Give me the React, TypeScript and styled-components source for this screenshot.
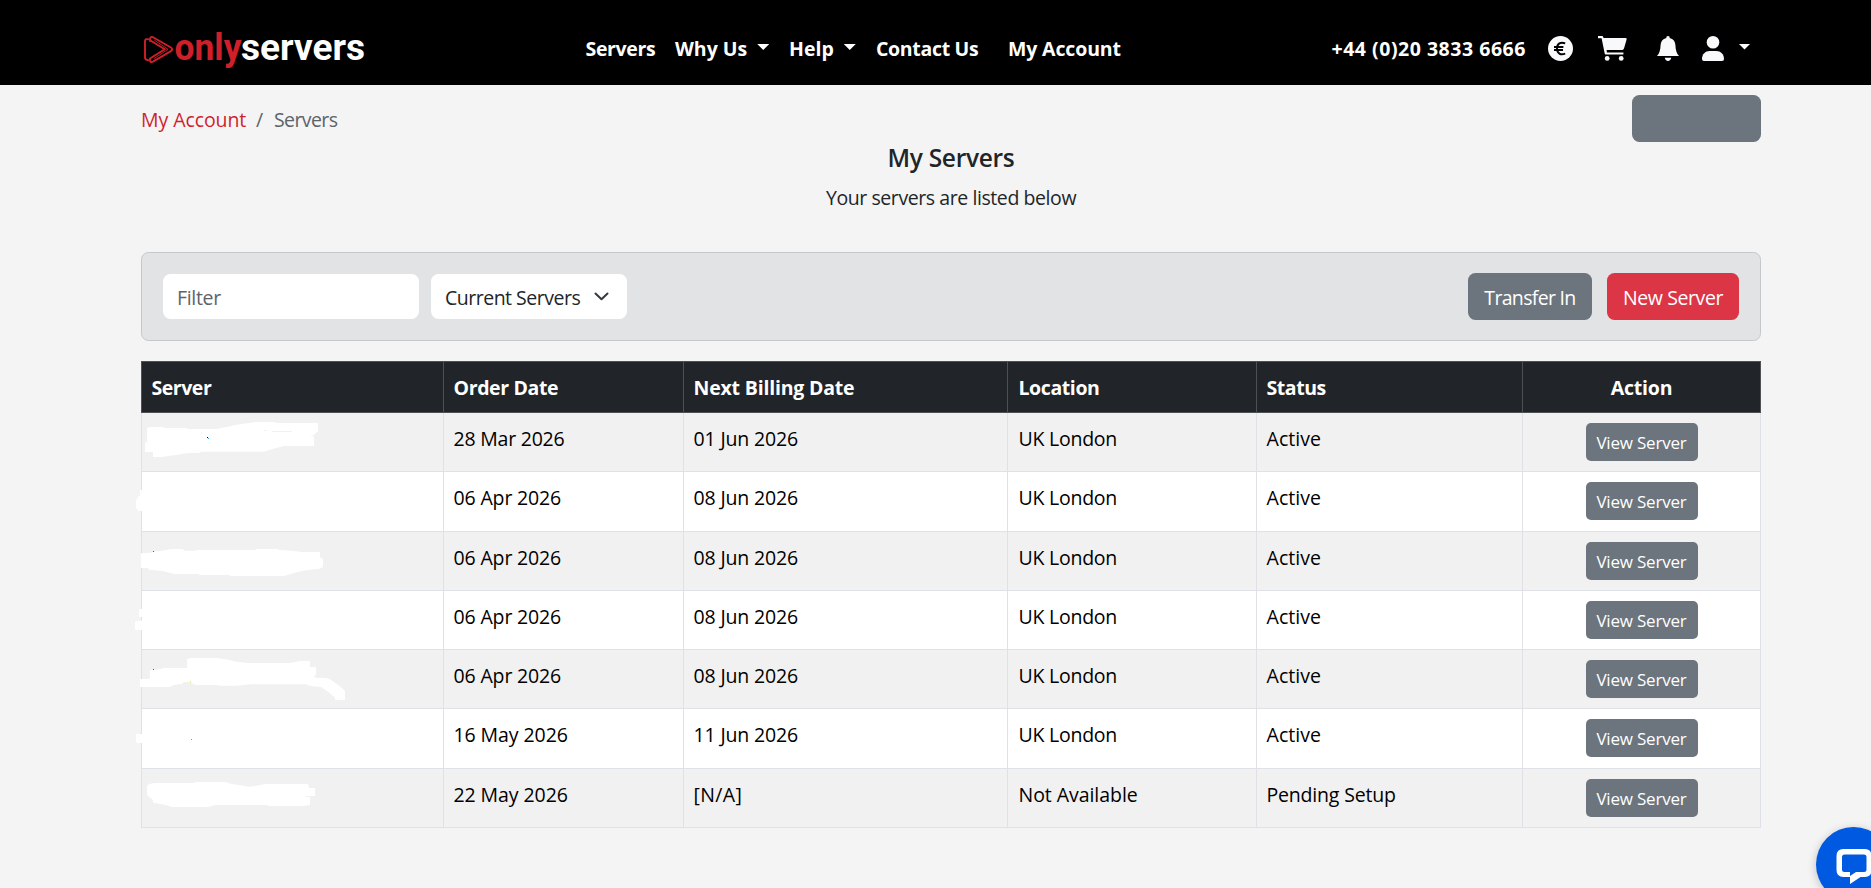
import React from "react";
import styled, { createGlobalStyle } from "styled-components";

const GlobalStyle = createGlobalStyle`
  * { box-sizing: border-box; }
  html, body { margin: 0; padding: 0; overflow: hidden; }
  body {
    background: #f4f4f4;
    color: #212529;
    font-family: "Open Sans", "Noto Sans", sans-serif;
    font-size: 19.5px;
    line-height: 30px;
  }
`;

const Page = styled.div`
  position: relative;
  width: 1871px;
  height: 888px;
  overflow: hidden;
`;

const Header = styled.header`
  display: flex;
  align-items: center;
  height: 85px;
  padding: 12px 0 0 141px;
  background: #000;
  color: #fff;
`;

const Logo = styled.svg`
  flex: none;
  margin-top: 1px;
  overflow: visible;
`;

const Nav = styled.nav`
  display: grid;
  grid-template-columns: 89.5px 114px 87px 132px 115.5px;
  margin-left: 214.5px;
  font-weight: 700;
`;

const NavItem = styled.a<{ $track: number }>`
  display: flex;
  align-items: center;
  gap: 10px;
  padding-top: 1px;
  white-space: nowrap;
  letter-spacing: ${(p) => p.$track}px;
`;

const Caret = styled.span`
  width: 12px;
  height: 6px;
  margin-top: -4px;
  background: #fff;
  clip-path: polygon(0 0, 100% 0, 50% 100%);
`;

const Tools = styled.div`
  display: flex;
  align-items: center;
  margin-left: 208px;
  font-weight: 700;
`;

const Phone = styled.span`
  width: 216px;
  padding-top: 1px;
  letter-spacing: 0.52px;
  white-space: nowrap;
`;

const ToolIcon = styled.svg<{ $after: number }>`
  flex: none;
  margin-right: ${(p) => p.$after}px;
  fill: #f8f9fa;
`;

const Main = styled.main`
  width: 1620px;
  margin-left: 141px;
  padding-top: 10px;
`;

const TopRow = styled.div`
  display: flex;
  justify-content: space-between;
`;

const Breadcrumb = styled.div`
  display: flex;
  padding-top: 10px;
  color: #5c636a;
  a { color: #d01f2e; letter-spacing: -0.08px; width: 115px; }
  i { font-style: normal; width: 18px; }
  span { letter-spacing: -0.6px; }
`;

const Button = styled.button<{ $w: number; $bg?: string; $track?: number }>`
  width: ${(p) => p.$w}px;
  height: 47px;
  padding: 2px 0 0;
  border: 0;
  border-radius: 7.5px;
  background: ${(p) => p.$bg ?? "#6c757d"};
  color: #fff;
  font: inherit;
  letter-spacing: ${(p) => p.$track ?? 0}px;
  white-space: nowrap;
`;

const SmallButton = styled.button`
  display: block;
  width: 112px;
  height: 38px;
  margin: -1px 0 0 53px;
  padding: 1px 0 0;
  border: 0;
  border-radius: 5px;
  background: #6c757d;
  color: #fff;
  font: inherit;
  font-size: 17px;
  letter-spacing: -0.2px;
`;

const Title = styled.h1`
  margin: 1px 0 9px;
  font-size: 24.5px;
  font-weight: 600;
  line-height: 30px;
  letter-spacing: -0.3px;
  text-align: center;
`;

const Subtitle = styled.p`
  margin: 0;
  padding-top: 1px;
  text-align: center;
  letter-spacing: -0.42px;
`;

const FilterCard = styled.section`
  display: flex;
  align-items: center;
  height: 89px;
  margin-top: 39px;
  padding: 0 21px;
  border: 1px solid #c4c8cb;
  border-radius: 7.5px;
  background: #e2e3e5;
`;

const FilterInput = styled.input`
  width: 256px;
  height: 45px;
  padding: 2px 14px 0;
  border: 0;
  border-radius: 7.5px;
  background: #fff;
  font: inherit;
  letter-spacing: -0.32px;
  &::placeholder { color: #5c636a; opacity: 1; }
`;

const Select = styled.div`
  display: flex;
  align-items: center;
  justify-content: space-between;
  width: 196px;
  height: 45px;
  margin: 0 auto 0 12px;
  padding: 2px 18px 0 14px;
  border-radius: 7.5px;
  background: #fff;
  letter-spacing: -0.5px;
  svg { margin-top: -3px; }
`;

const Actions = styled.div`
  display: flex;
  gap: 15px;
`;

const TableWrap = styled.div`
  position: relative;
  margin-top: 20px;
`;

const Table = styled.table`
  width: 1620px;
  table-layout: fixed;
  border-collapse: separate;
  border-spacing: 0;
`;

const Th = styled.th<{ $track: number; $center?: boolean }>`
  height: 52px;
  padding: 2px 9.5px 0;
  border: solid #4d5154;
  border-width: 1px 0 1px 1px;
  background: #212529;
  color: #fff;
  text-align: ${(p) => (p.$center ? "center" : "left")};
  letter-spacing: ${(p) => p.$track}px;
  &:last-child { border-right-width: 1px; }
  &:nth-child(4) { padding-left: 10.5px; }
`;

const Row = styled.tr<{ $h: number; $striped: boolean }>`
  height: ${(p) => p.$h}px;
  background: ${(p) => (p.$striped ? "#f1f1f1" : "#fff")};
`;

const Td = styled.td<{ $track?: number }>`
  padding: 11px 9.5px 0;
  border: solid #dee2e6;
  border-width: 0 0 1px 1px;
  color: #000;
  vertical-align: top;
  letter-spacing: ${(p) => p.$track ?? 0}px;
  &:last-child { border-right-width: 1px; }
  &:nth-child(4) { padding-left: 10.5px; }
`;

const Redactions = styled.svg`
  position: absolute;
  left: -21px;
  top: 39px;
  fill: #fff;
  pointer-events: none;
`;

const ChatButton = styled.div`
  position: absolute;
  left: 1816px;
  top: 827px;
  width: 75px;
  height: 75px;
  border-radius: 50%;
  background: #0059e1;
  box-shadow: 0 2px 10px rgba(0, 0, 0, 0.22);
`;

const columns = [302, 240, 324, 249, 266, 239];

type Server = [string, string, string, string, number];
const servers: Server[] = [
  ["28 Mar 2026", "01 Jun 2026", "UK London", "Active", 59],
  ["06 Apr 2026", "08 Jun 2026", "UK London", "Active", 60],
  ["06 Apr 2026", "08 Jun 2026", "UK London", "Active", 59],
  ["06 Apr 2026", "08 Jun 2026", "UK London", "Active", 59],
  ["06 Apr 2026", "08 Jun 2026", "UK London", "Active", 59],
  ["16 May 2026", "11 Jun 2026", "UK London", "Active", 60],
  ["22 May 2026", "[N/A]", "Not Available", "Pending Setup", 59],
];

const tracking: Record<string, number> = {
  "28 Mar 2026": -0.22,
  "16 May 2026": -0.08,
  "22 May 2026": -0.08,
  "UK London": -0.24,
  Active: 0.05,
  "Not Available": -0.05,
  "Pending Setup": -0.18,
  "[N/A]": 0.36,
};
const track = (text: string) => tracking[text] ?? -0.15;

export default function App() {
  return (
    <Page>
      <GlobalStyle />
      <Header>
        <Logo width="230" height="50" viewBox="141 24 230 50">
          <g fill="none" stroke="#cf2029" strokeWidth="1.9" strokeLinejoin="round" strokeLinecap="round">
            <path d="M148.2 39.3 Q145 38.6 145 41 V57.5 Q145 60 148.2 60.2" />
            <path d="M150 41 V39.5 Q150 36 153 37.2 L170.5 47.2 Q174 49.3 170.5 51.4 L153 61.6 Q150 62.8 150 60 V58.5 L164.8 49.3 L150 40.2" />
            <path d="M154.5 40.2 L168 49.3 L154.5 58.3" strokeWidth="0.9" />
          </g>
          <g fontFamily="Roboto, sans-serif" fontWeight="700" fontSize="37">
            <text x="174.5" y="59.8" fill="#cf2029" textLength="67" lengthAdjust="spacingAndGlyphs">only</text>
            <text x="241" y="59.8" fill="#fff" textLength="124" lengthAdjust="spacingAndGlyphs">servers</text>
          </g>
        </Logo>
        <Nav>
          <NavItem $track={-0.35}>Servers</NavItem>
          <NavItem $track={0}>Why Us<Caret /></NavItem>
          <NavItem $track={0}>Help<Caret /></NavItem>
          <NavItem $track={-0.32}>Contact Us</NavItem>
          <NavItem $track={-0.14}>My Account</NavItem>
        </Nav>
        <Tools>
          <Phone>+44 (0)20 3833 6666</Phone>
          <ToolIcon $after={25.5} width="25" height="25" viewBox="0 0 25 25">
            <circle cx="12.5" cy="12.5" r="12.5" />
            <path
              d="M17.2 7.4 C12.6 5.6 9 7.6 9 12.5 C9 17.4 12.6 19.4 17.2 17.6 M6 11 H15.4 M6 14 H15"
              fill="none" stroke="#000" strokeWidth="1.9"
            />
          </ToolIcon>
          <ToolIcon $after={29.5} width="29" height="25" viewBox="0 0 29 25">
            <path d="M0 0 H4.6 L5.6 2 H27.6 Q29 2 28.6 3.4 L26 12.6 Q25.6 14 24.2 14 H8.6 L8.9 16.4 H25.4 V18.4 H7.4 Q6.9 18.4 6.7 17.6 L3.6 2.2 H0 Z" />
            <circle cx="9.2" cy="22.4" r="2.4" />
            <circle cx="23.2" cy="22.4" r="2.4" />
          </ToolIcon>
          <ToolIcon $after={23} width="22" height="25" viewBox="0 0 22 25">
            <path d="M11 0 C12.3 0 12.8 .8 12.6 1.9 C16.4 2.8 18.3 5.6 18.4 9 C18.6 14 19.6 17.6 22 20 H0 C2.4 17.6 3.4 14 3.6 9 C3.7 5.6 5.6 2.8 9.4 1.9 C9.2 .8 9.7 0 11 0 Z M7.8 21.8 H14.2 C14 23.8 12.7 25 11 25 C9.3 25 8 23.8 7.8 21.8 Z" />
          </ToolIcon>
          <ToolIcon $after={15} width="22" height="25" viewBox="0 0 22 25">
            <circle cx="11" cy="6.3" r="6.3" />
            <path d="M0 23 C0 18 3.4 15 7.6 15 H14.4 C18.6 15 22 18 22 23 Q22 25 20 25 H2 Q0 25 0 23 Z" />
          </ToolIcon>
          <Caret />
        </Tools>
      </Header>

      <Main>
        <TopRow>
          <Breadcrumb>
            <a>My Account</a>
            <i>/</i>
            <span>Servers</span>
          </Breadcrumb>
          <Button $w={129} aria-label="Account" />
        </TopRow>
        <Title>My Servers</Title>
        <Subtitle>Your servers are listed below</Subtitle>

        <FilterCard>
          <FilterInput placeholder="Filter" />
          <Select>
            Current Servers
            <svg width="15" height="9" viewBox="0 0 15 9" fill="none" stroke="#343a40" strokeWidth="2" strokeLinecap="round" strokeLinejoin="round">
              <path d="M1.5 1.5 L7.5 7.3 L13.5 1.5" />
            </svg>
          </Select>
          <Actions>
            <Button $w={124} $track={-0.68}>Transfer In</Button>
            <Button $w={132} $track={-0.39} $bg="#dc3545">New Server</Button>
          </Actions>
        </FilterCard>

        <TableWrap>
          <Table>
            <colgroup>
              {columns.map((w, i) => <col key={i} width={w} />)}
            </colgroup>
            <thead>
              <tr>
                <Th $track={-0.47}>Server</Th>
                <Th $track={-0.37}>Order Date</Th>
                <Th $track={-0.19}>Next Billing Date</Th>
                <Th $track={-0.4}>Location</Th>
                <Th $track={-0.45}>Status</Th>
                <Th $track={-0.19} $center>Action</Th>
              </tr>
            </thead>
            <tbody>
              {servers.map(([ordered, billed, location, status, h], i) => (
                <Row key={i} $h={h} $striped={i % 2 === 0}>
                  <Td />
                  {[ordered, billed, location, status].map((text, j) => (
                    <Td key={j} $track={track(text)}>{text}</Td>
                  ))}
                  <Td><SmallButton>View Server</SmallButton></Td>
                </Row>
              ))}
            </tbody>
          </Table>
          <Redactions width="400" height="440" viewBox="0 0 1200 1320">
            <path d="M81 84 L90 81 H130 L134 84 H200 L204 87 H288 L325 80 L345 75 L370 71 L408 66 H464 L468 69 H594 V93 L580 106 L568 109 H582 V138 H492 L455 148 L432 155 H243 L240 158 L198 160 L170 165 L147 167 L128 171 H99 V156 H75 V129 L81 126 Z" />
            <path d="M432 90 H441 V93 H432 Z M456 93 H516 V96 H456 Z M144 483 H150 V486 H144 Z" fill="#f1f1f1" />
            <path d="M66 270 H60 V288 L54 291 L48 303 V324 L57 333 H66 V345 H72 V260 H66 Z" />
            <path d="M63 460 L90 459 L100 455 L138 451 L150 447 H189 L192 452 H228 V450 H408 V447 H474 L478 450 L515 452 L546 456 H600 V472 L609 477 V501 L600 506 L560 511 L535 515 L520 520 L492 528 H330 V525 H237 V522 H162 L129 513 L87 509 L84 504 H63 Z" />
            <path d="M57 627 H72 V700 H66 V690 H45 V665 L54 662 H66 V651 H57 Z" />
            <path d="M90 810 H105 L135 804 H201 V777 L213 774 H291 L330 780 L348 785 L385 789 H510 L540 783 H570 V801 H588 V825 L580 828 L590 834 H618 L630 838 L662 860 L675 873 V900 H645 V893 L625 876 L603 861 L570 858 L558 853 H393 L350 857 H300 L290 855 H225 L210 846 H190 L187 851 L160 855 L150 861 H60 V837 H87 L90 834 Z" />
            <path d="M48 1002 H72 V1029 H54 L48 1026 Z" />
            <path d="M81 1158 L87 1152 L105 1149 H225 V1146 H315 L336 1152 L370 1157 L390 1160 L410 1157 L435 1152 H564 L567 1164 H585 V1188 H558 V1191 H570 V1215 L546 1218 H444 V1215 H285 L264 1221 H156 L138 1215 L99 1208 V1201 L81 1185 Z" />
            <path d="M261 111 H264 V114 H261 Z" fill="#000" />
            <path d="M264 114 H267 V117 H264 Z" fill="#39a5ee" />
            <path d="M99 453 H102 V456 H99 Z M99 807 H102 V810 H99 Z" fill="#8a4a2a" />
            <path d="M210 843 H213 V849 H210 Z" fill="#f3f08a" />
            <path d="M213 1017 H216 V1020 H213 Z" fill="#b08a60" />
          </Redactions>
        </TableWrap>
      </Main>

      <ChatButton>
        <svg width="75" height="75" viewBox="1816 827 75 75">
          <path
            fill="#fff" fillRule="evenodd"
            d="M1843.5 849 H1864.5 Q1871.5 849 1871.5 856 V870 Q1871.5 877 1864.5 877 H1860.5 L1850 884 V877 H1843.5 Q1836.5 877 1836.5 870 V856 Q1836.5 849 1843.5 849 Z M1844.5 854.5 Q1842 854.5 1842 857 V869.5 Q1842 872 1844.5 872 H1850 V876 L1856 872 H1864 Q1866.5 872 1866.5 869.5 V857 Q1866.5 854.5 1864 854.5 Z"
          />
        </svg>
      </ChatButton>
    </Page>
  );
}
